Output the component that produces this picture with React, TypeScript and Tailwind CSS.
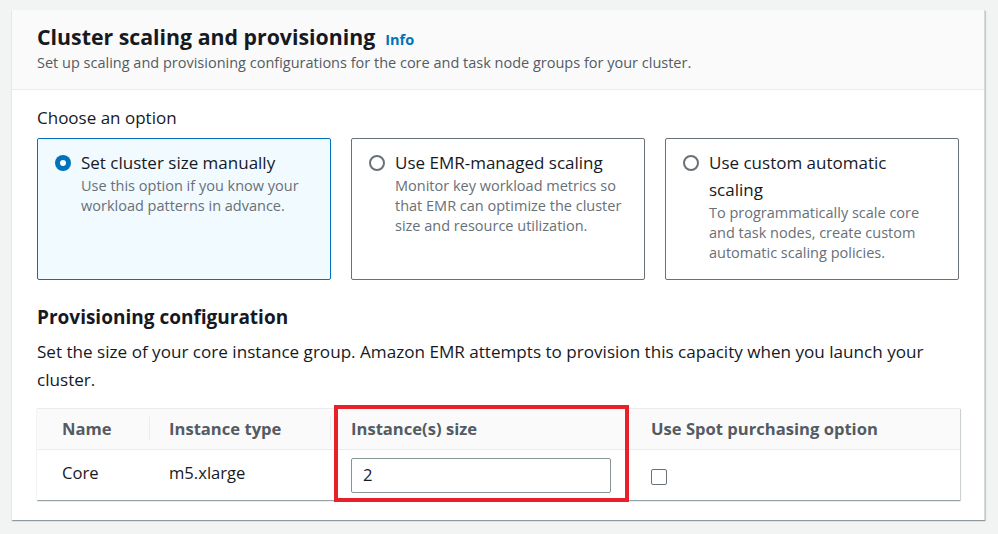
import React from "react";

const font = { fontFamily: '"Open Sans", "Noto Sans", Arial, sans-serif' };

function Radio({ checked }: { checked?: boolean }) {
  return checked ? (
    <span className="mt-[6px] flex h-[16px] w-[16px] shrink-0 items-center justify-center rounded-full bg-[#0073bb]">
      <span className="h-[6px] w-[6px] rounded-full bg-white" />
    </span>
  ) : (
    <span className="mt-[6px] h-[16px] w-[16px] shrink-0 rounded-full border-2 border-[#687078] bg-white" />
  );
}

function OptionCard({
  checked,
  title,
  desc,
}: {
  checked?: boolean;
  title: string;
  desc: string;
}) {
  return (
    <div
      className={
        checked
          ? "flex h-[142px] gap-[10px] rounded-[2px] border border-[#0073bb] bg-[#f1faff] pl-[17px] pr-[14px] pt-[10px]"
          : "flex h-[142px] gap-[10px] rounded-[2px] border border-[#687078] bg-white pl-[17px] pr-[14px] pt-[10px]"
      }
    >
      <Radio checked={checked} />
      <div>
        <div className="text-[17px] leading-[27px] text-[#16191f]">{title}</div>
        <div className="text-[14.5px] leading-[20px] text-[#687078]">{desc}</div>
      </div>
    </div>
  );
}

export default function App() {
  return (
    <div className="h-[534px] w-[998px] bg-[#f2f3f3] pl-[12px] pt-[10px]" style={font}>
      <div className="w-[973px] border-r border-[#d5dbdb] bg-white shadow-[0_1px_1px_rgba(0,28,36,0.3),1px_1px_1px_rgba(0,28,36,0.15)]">
        <div className="h-[80px] border-b border-[#eaeded] bg-[#fafafa] px-[25px] pt-[13px]">
          <div className="flex items-baseline gap-[10px]">
            <span className="text-[21.3px] font-bold leading-[28px] text-[#16191f]">
              Cluster scaling and provisioning
            </span>
            <span className="text-[14.5px] font-bold text-[#0073bb]">Info</span>
          </div>
          <div className="mt-[2px] text-[14.5px] leading-[20px] text-[#545b64]">
            Set up scaling and provisioning configurations for the core and task node groups for your cluster.
          </div>
        </div>

        <div className="px-[25px] pb-[20px] pt-[16px]">
          <div className="text-[17px] leading-[24px] text-[#16191f]">Choose an option</div>
          <div className="mt-[8px] grid grid-cols-[294px_294px_294px] gap-[20px]">
            <OptionCard
              checked
              title="Set cluster size manually"
              desc="Use this option if you know your workload patterns in advance."
            />
            <OptionCard
              title="Use EMR-managed scaling"
              desc="Monitor key workload metrics so that EMR can optimize the cluster size and resource utilization."
            />
            <OptionCard
              title="Use custom automatic scaling"
              desc="To programmatically scale core and task nodes, create custom automatic scaling policies."
            />
          </div>

          <div className="mt-[24px] text-[19px] font-bold leading-[26px] text-[#16191f]">
            Provisioning configuration
          </div>
          <div className="mt-[8px] text-[17.1px] leading-[28px] text-[#16191f]">
            Set the size of your core instance group. Amazon EMR attempts to provision this capacity when you launch your cluster.
          </div>

          <div className="relative mt-[14px] w-[923px] border-t border-[#eaeded] bg-white shadow-[0_1px_1px_rgba(0,28,36,0.3),1px_1px_1px_rgba(0,28,36,0.15)]">
            <div className="grid h-[40px] grid-cols-[113px_181px_299px_1fr] items-center bg-[#fafafa] text-[16.6px] font-bold text-[#545b64]">
              <div className="border-r border-[#eaeded] pl-[25px] leading-[24px]">Name</div>
              <div className="border-r border-[#eaeded] pl-[19px] leading-[24px]">Instance type</div>
              <div className="pl-[20px] leading-[24px]">Instance(s) size</div>
              <div className="pl-[21px] leading-[24px]">Use Spot purchasing option</div>
            </div>
            <div className="grid h-[51px] grid-cols-[113px_181px_299px_1fr] items-center border-t border-[#eaeded] text-[16.6px] text-[#16191f]">
              <div className="pl-[25px] pb-[4px]">Core</div>
              <div className="pl-[19px] pb-[4px]">m5.xlarge</div>
              <div className="pl-[20px]">
                <div className="flex h-[35px] w-[260px] items-center rounded-[2px] border border-[#879596] pl-[11px]">
                  2
                </div>
              </div>
              <div className="pl-[21px] pt-[4px]">
                <div className="h-[16px] w-[16px] rounded-[2px] border border-[#687078] bg-white" />
              </div>
            </div>
            <div className="pointer-events-none absolute left-[297px] top-[-4px] h-[97px] w-[295px] border-[4px] border-[#e8202a]" />
          </div>
        </div>
      </div>
    </div>
  );
}
